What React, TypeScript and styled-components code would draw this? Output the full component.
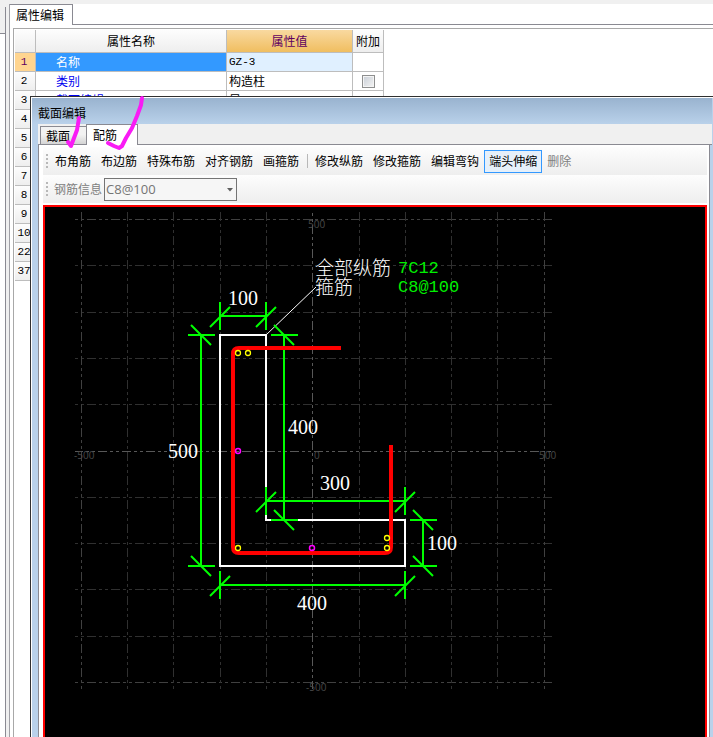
import React from 'react';
import styled, { createGlobalStyle } from 'styled-components';

const ui = '"Noto Sans CJK SC", sans-serif';
const mono = '"Liberation Mono", "Noto Sans CJK SC", monospace';

const GlobalStyle = createGlobalStyle`
  * { box-sizing: border-box; }
  body { margin: 0; background: #f0f0f0; font: 12px/16px ${ui}; color: #000; overflow: hidden; }
  button, select, input { font: inherit; color: inherit; margin: 0; }
`;

const Page = styled.div`
  position: relative;
  display: flex;
  height: 100vh;
  padding-top: 4px;
  overflow: hidden;
`;

const SidePanel = styled.div`
  flex: none;
  width: 6px;
  margin: 3px 3px 0 0;
  display: flex;
  flex-direction: column;
  border-right: 1px solid #8a8a92;
`;

const SideHead = styled.div`
  height: 27px;
  border-bottom: 1px solid #8a8a92;
`;

const SideBody = styled.div`
  flex: 1;
  background: #fff;
`;

const PropertyPanel = styled.section`
  flex: 1;
  min-width: 0;
  display: flex;
  flex-direction: column;
  background: #fff;
  border-left: 1px solid #a0a0a6;
`;

const PanelTabs = styled.div`
  flex: none;
  display: flex;
`;

const PanelTab = styled.button`
  height: 21px;
  padding: 0 8px 0 6px;
  border: 1px solid #8a8a92;
  border-width: 1px 1px 0 0;
  background: #fff;
  line-height: 18px;
  white-space: nowrap;
`;

const TabFiller = styled.div`
  flex: 1;
  border-bottom: 1px solid #8a8a92;
`;

const GridFrame = styled.div`
  flex: 1;
  margin: 3px 0 0 3px;
  padding: 1px;
  border: 1px solid #a8a8a8;
  border-width: 1px 0 0 1px;
`;

const PropTable = styled.table`
  table-layout: fixed;
  width: 369px;
  border-collapse: separate;
  border-spacing: 0;
`;

const HeadCell = styled.th<{ $active?: boolean }>`
  height: 23px;
  padding: 0;
  font-weight: 400;
  color: ${p => (p.$active ? '#600060' : '#000')};
  background: ${p => (p.$active ? 'linear-gradient(#f9d9a0, #f0be60)' : 'linear-gradient(#fdfdfd, #eeeeee)')};
  border: 1px solid #bdbdbd;
  border-width: 0 1px 1px 0;
`;

const RowHead = styled.th<{ $active?: boolean }>`
  height: 19px;
  padding: 0 2px 0 0;
  font: 11px/16px ${mono};
  color: ${p => (p.$active ? '#600060' : '#000')};
  background: ${p => (p.$active ? '#ffd590' : 'linear-gradient(#fdfdfd, #eeeeee)')};
  border: 1px solid #bdbdbd;
  border-width: 0 1px 1px 0;
`;

const NameCell = styled.td<{ $active?: boolean }>`
  padding: 0 0 0 20px;
  color: ${p => (p.$active ? '#fff' : '#0000f0')};
  background: ${p => (p.$active ? '#3399ff' : '#fff')};
  border: 1px solid #bdbdbd;
  border-width: 0 1px 1px 0;
`;

const ValueCell = styled.td<{ $active?: boolean; $code?: boolean }>`
  padding: 0 0 0 2px;
  font: ${p => (p.$code ? `11px/16px ${mono}` : `12px/16px ${ui}`)};
  background: ${p => (p.$active ? '#e0f0ff' : '#fff')};
  border: 1px solid #bdbdbd;
  border-width: 0 1px 1px 0;
`;

const CheckCell = styled.td`
  padding: 0;
  text-align: center;
  border: 1px solid #bdbdbd;
  border-width: 0 1px 1px 0;
`;

const CheckBox = styled.input`
  appearance: none;
  display: block;
  width: 13px;
  height: 13px;
  margin: 0 auto;
  border: 1px solid #8e8f8f;
  background: linear-gradient(135deg, #c8ced6, #f4f4f4);
  box-shadow: inset 0 0 0 1px #f4f4f4;
`;

const Dialog = styled.section`
  position: absolute;
  inset: 96px 0 0 30px;
  display: flex;
  flex-direction: column;
  background: #b9d1ea;
  border: 1px solid #303030;
  border-width: 1px 0 0 1px;
  box-shadow: inset 1px 1px #fff;
  padding: 1px 1px 0 7px;
`;

const TitleBar = styled.header`
  flex: none;
  height: 26px;
  margin-left: -6px;
  padding: 0 6px;
  background: linear-gradient(#99b3cf, #b9d1ea);
  line-height: 30px;
`;

const DialogTabs = styled.div`
  flex: none;
  display: flex;
  align-items: flex-end;
  height: 21px;
  background: #f0f0f0;
`;

const TabEdge = styled.div<{ $grow?: boolean }>`
  flex: ${p => (p.$grow ? '1' : '0 0 2px')};
  align-self: stretch;
  border-bottom: 1px solid #8a8a92;
`;

const DialogTab = styled.button<{ $active?: boolean }>`
  height: ${p => (p.$active ? 21 : 19)}px;
  width: ${p => (p.$active ? 52 : 46)}px;
  padding: 0 0 0 ${p => (p.$active ? 6 : 5)}px;
  text-align: left;
  line-height: 18px;
  background: ${p => (p.$active ? '#fff' : 'linear-gradient(#f2f2f2 45%, #d4d4d4)')};
  border: 1px solid #8a8a92;
  border-width: 1px ${p => (p.$active ? 1 : 0)}px ${p => (p.$active ? 0 : 1)}px 1px;
`;

const TabPage = styled.div`
  flex: 1;
  min-height: 0;
  display: flex;
  flex-direction: column;
  margin-right: 2px;
  padding: 2px 2px 0 4px;
  background: #fff;
  border: 1px solid #8a8a92;
  border-width: 0 1px 0 1px;
`;

const ToolRow = styled.div`
  flex: none;
  display: flex;
  align-items: center;
  height: 28px;
  padding: 0 3px;
  background: linear-gradient(#fdfdfd, #eeeeee);
`;

const Grip = styled.span`
  flex: none;
  width: 2px;
  height: 14px;
  margin-right: 2px;
  background: repeating-linear-gradient(#b8b8b8 0 2px, transparent 2px 4px);
`;

const ToolButton = styled.button<{ $pressed?: boolean }>`
  flex: none;
  height: 23px;
  padding: 0 4px;
  line-height: 20px;
  white-space: nowrap;
  border: 1px solid ${p => (p.$pressed ? '#3399ff' : 'transparent')};
  background: ${p => (p.$pressed ? '#e6f0fa' : 'transparent')};

  &:disabled { color: #808080; }
`;

const Separator = styled.span`
  flex: none;
  width: 1px;
  height: 14px;
  margin: 0 2px 0 3px;
  background: #b8b8b8;
`;

const FieldLabel = styled.label`
  margin: 0 2px 0 4px;
  color: #808080;
`;

const SelectBox = styled.div`
  position: relative;
  width: 133px;
`;

const Select = styled.select`
  appearance: none;
  display: block;
  width: 100%;
  height: 23px;
  padding: 0 16px 0 1px;
  border: 1px solid #747474;
  border-radius: 0;
  background: #f6f6f6;
  font: 13px/20px "Open Sans", sans-serif;

  &:disabled { color: #747474; opacity: 1; }
`;

const Arrow = styled.svg`
  position: absolute;
  right: 4px;
  top: 10px;
`;

const Viewport = styled.div`
  flex: 1;
  min-height: 0;
  margin-top: 2px;
  background: #000;
  border: 2px solid #f00;
  border-bottom: 0;
`;

const Drawing = styled.svg`
  display: block;
  width: 100%;
  height: 100%;
`;

const DimText = styled.text`
  fill: #fff;
  font: 20px "Liberation Serif", serif;
`;

const NoteText = styled.text`
  fill: #fff;
  font: 300 19px "Noto Sans CJK SC", sans-serif;
`;

const SpecText = styled.text`
  fill: #00f000;
  font: 17px "Liberation Mono", monospace;
`;

const AxisText = styled.text`
  fill: #484848;
  font: 10px "Open Sans", sans-serif;
`;

const Marks = styled.svg`
  position: absolute;
  left: 60px;
  top: 92px;
  pointer-events: none;
`;

type Row = { id: number; name?: string; value?: string; check?: boolean };

const rows: Row[] = [
  { id: 1, name: '名称', value: 'GZ-3' },
  { id: 2, name: '类别', value: '构造柱', check: true },
  { id: 3, name: '截面编辑', value: '是' },
  ...[4, 5, 6, 7, 8, 9, 10, 22, 37].map(id => ({ id })),
];

// Drawing units are pixels, with the origin at the section's insertion point.
const gridColumns = [-231, -185, -139, -92, -46, 0, 47, 93, 139, 185, 232];
const gridRows = [-232, -186, -139, -93, -47, 0, 46, 92, 138, 185, 231];

type DimProps = { axis: 'h' | 'v'; at: number; from: number; to: number };

function Dimension({ axis, at, from, to }: DimProps) {
  const d =
    axis === 'h'
      ? `M${from} ${at}H${to}` +
        [from, to].map(x => `M${x} ${at - 14}V${at + 14}M${x - 10} ${at + 11}L${x + 10} ${at - 9}`).join('')
      : `M${at} ${from}V${to}` +
        [from, to].map(y => `M${at - 13} ${y}H${at + 14}M${at - 10} ${y - 10}L${at + 10} ${y + 10}`).join('');
  return <path d={d} stroke="#0f0" strokeWidth={2} fill="none" />;
}

function GridLayer() {
  const tone = (v: number) => (v === 0 ? '#585858' : Math.abs(v) > 200 ? '#404040' : '#303030');
  return (
    <g strokeDasharray="9 3 3 3 3 3" shapeRendering="crispEdges">
      {gridRows.map(v => (
        <path key={`h${v}`} d={`M-237 ${v + 0.5}H240`} stroke={tone(v)} strokeDashoffset={v === 0 ? 1 : 12} />
      ))}
      {gridColumns.map(v => (
        <path key={`v${v}`} d={`M${v + 0.5} -239V238`} stroke={tone(v)} strokeDashoffset={v === 0 ? 11 : 0} />
      ))}
    </g>
  );
}

function Section() {
  return (
    <Drawing role="img" aria-label="截面配筋">
      <g transform="translate(267 244)">
        <GridLayer />
        <AxisText x={-4} y={-223}>500</AxisText>
        <AxisText x={-238} y={8}>-500</AxisText>
        <AxisText x={2} y={8}>0</AxisText>
        <AxisText x={227} y={8}>500</AxisText>
        <AxisText x={-6} y={240}>-500</AxisText>
        <path d="M-92 -116H-46V69H93V115H-92Z" fill="none" stroke="#fff" strokeWidth={2} />
        <path d="M-46 -116L4 -164" stroke="#fff" />
        <Dimension axis="h" at={-135} from={-92} to={-46} />
        <Dimension axis="v" at={-111} from={-116} to={115} />
        <Dimension axis="v" at={-28} from={-116} to={69} />
        <Dimension axis="h" at={50} from={-46} to={93} />
        <Dimension axis="v" at={111} from={69} to={115} />
        <Dimension axis="h" at={134} from={-92} to={93} />
        <path d="M29 -103H-73Q-79 -103 -79 -97V96Q-79 102 -73 102H73Q79 102 79 96V-6" fill="none" stroke="#f00" strokeWidth={4} />
        {[[-74, -98], [-64, -98], [-74, 97], [75, 87], [75, 97]].map(([x, y]) => (
          <circle key={`${x},${y}`} cx={x} cy={y} r={2.5} fill="none" stroke="#ff0" strokeWidth={1.3} />
        ))}
        {[[-74, 0], [0, 97]].map(([x, y]) => (
          <circle key={`${x},${y}`} cx={x} cy={y} r={2.5} fill="none" stroke="#f0f" strokeWidth={1.5} />
        ))}
        <DimText x={-84} y={-146}>100</DimText>
        <DimText x={-144} y={7}>500</DimText>
        <DimText x={-24} y={-17}>400</DimText>
        <DimText x={8} y={39}>300</DimText>
        <DimText x={115} y={99}>100</DimText>
        <DimText x={-15} y={159}>400</DimText>
        <NoteText x={3} y={-176}>全部纵筋</NoteText>
        <NoteText x={3} y={-157}>箍筋</NoteText>
        <SpecText x={86} y={-178}>7C12</SpecText>
        <SpecText x={86} y={-159}>C8@100</SpecText>
      </g>
    </Drawing>
  );
}

export default function App() {
  return (
    <Page>
      <GlobalStyle />
      <SidePanel>
        <SideHead />
        <SideBody />
      </SidePanel>
      <PropertyPanel>
        <PanelTabs>
          <PanelTab type="button">属性编辑</PanelTab>
          <TabFiller />
        </PanelTabs>
        <GridFrame>
          <PropTable>
            <colgroup>
              <col width={21} />
              <col width={191} />
              <col width={126} />
              <col width={31} />
            </colgroup>
            <thead>
              <tr>
                <HeadCell />
                <HeadCell scope="col">属性名称</HeadCell>
                <HeadCell scope="col" $active>属性值</HeadCell>
                <HeadCell scope="col">附加</HeadCell>
              </tr>
            </thead>
            <tbody>
              {rows.map(r => (
                <tr key={r.id}>
                  <RowHead scope="row" $active={r.id === 1}>{r.id}</RowHead>
                  <NameCell $active={r.id === 1}>{r.name}</NameCell>
                  <ValueCell $active={r.id === 1} $code={r.id === 1}>{r.value}</ValueCell>
                  <CheckCell>{r.check && <CheckBox type="checkbox" aria-label={`${r.name} 附加`} />}</CheckCell>
                </tr>
              ))}
            </tbody>
          </PropTable>
        </GridFrame>
      </PropertyPanel>

      <Dialog role="dialog" aria-label="截面编辑">
        <TitleBar>截面编辑</TitleBar>
        <DialogTabs role="tablist">
          <TabEdge />
          <DialogTab type="button" role="tab">截面</DialogTab>
          <DialogTab type="button" role="tab" aria-selected $active>配筋</DialogTab>
          <TabEdge $grow />
        </DialogTabs>
        <TabPage>
          <ToolRow role="toolbar">
            <Grip />
            {['布角筋', '布边筋', '特殊布筋', '对齐钢筋', '画箍筋'].map(t => (
              <ToolButton key={t} type="button">{t}</ToolButton>
            ))}
            <Separator />
            {['修改纵筋', '修改箍筋', '编辑弯钩'].map(t => (
              <ToolButton key={t} type="button">{t}</ToolButton>
            ))}
            <ToolButton type="button" aria-pressed $pressed>端头伸缩</ToolButton>
            <ToolButton type="button" disabled>删除</ToolButton>
          </ToolRow>
          <ToolRow>
            <Grip />
            <FieldLabel htmlFor="rebar">钢筋信息</FieldLabel>
            <SelectBox>
              <Select id="rebar" disabled defaultValue="C8@100">
                <option>C8@100</option>
              </Select>
              <Arrow width="6" height="4" aria-hidden>
                <path d="M0 0H6L3 3.5Z" fill="#606060" />
              </Arrow>
            </SelectBox>
          </ToolRow>
          <Viewport>
            <Section />
          </Viewport>
        </TabPage>
      </Dialog>

      <Marks width="90" height="62" aria-hidden>
        <g fill="none" stroke="#f91bf5" strokeWidth={4} strokeLinecap="round" strokeLinejoin="round">
          <path d="M19 26L17 38L14 46L11 54L8 50" />
          <path d="M82 6L81 13L77 24L72 36L66 46L62 54L59 56L54 54L48 51" />
        </g>
      </Marks>
    </Page>
  );
}
